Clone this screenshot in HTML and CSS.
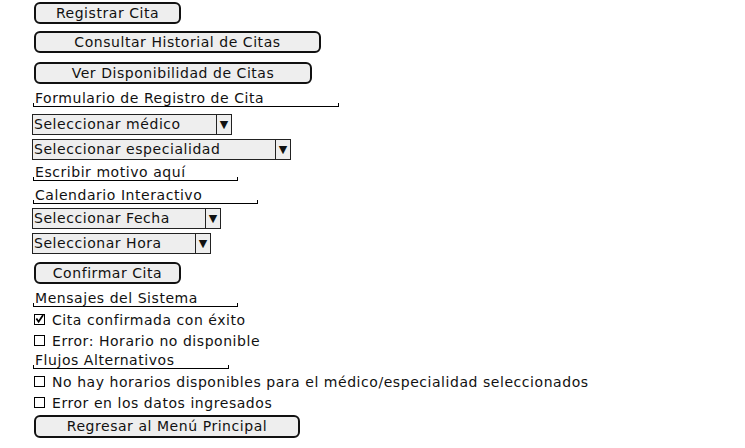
FILE: index.html
```html
<!DOCTYPE html>
<html lang="es">

<head>
    <meta charset="utf-8">
    <title>Registro de Cita</title>
    <link rel="stylesheet" href="styles.css">
</head>

<body>
    <main class="pantalla">
        <button class="boton boton-registrar">Registrar Cita</button>
        <button class="boton boton-historial">Consultar Historial de Citas</button>
        <button class="boton boton-disponibilidad">Ver Disponibilidad de Citas</button>

        <div class="campo campo-formulario">Formulario de Registro de Cita</div>
        <div class="lista lista-medico"><span class="valor">Seleccionar médico</span><span class="flecha">▼</span></div>
        <div class="lista lista-especialidad"><span class="valor">Seleccionar especialidad</span><span class="flecha">▼</span></div>
        <div class="campo campo-motivo">Escribir motivo aquí</div>

        <div class="campo campo-calendario">Calendario Interactivo</div>
        <div class="lista lista-fecha"><span class="valor">Seleccionar Fecha</span><span class="flecha">▼</span></div>
        <div class="lista lista-hora"><span class="valor">Seleccionar Hora</span><span class="flecha">▼</span></div>
        <button class="boton boton-confirmar">Confirmar Cita</button>

        <div class="campo campo-mensajes">Mensajes del Sistema</div>
        <label class="opcion"><span class="casilla marcada"><svg viewBox="0 0 10 10" width="10" height="10"><path d="M1.5 4.5 L4 8 L9 0.5" fill="none" stroke="#000" stroke-width="2"/></svg></span>Cita confirmada con éxito</label>
        <label class="opcion"><span class="casilla"></span>Error: Horario no disponible</label>

        <div class="campo campo-flujos">Flujos Alternativos</div>
        <label class="opcion"><span class="casilla"></span>No hay horarios disponibles para el médico/especialidad seleccionados</label>
        <label class="opcion"><span class="casilla"></span>Error en los datos ingresados</label>
        <button class="boton boton-regresar">Regresar al Menú Principal</button>
    </main>
</body></html>
```

FILE: styles.css
```css
* {
    margin: 0;
    box-sizing: border-box;
}

body {
    background-color: #fff;
    font-family: "DejaVu Sans", sans-serif;
    font-size: 14px;
    letter-spacing: 0.55px;
    color: #111;
}

.pantalla {
    display: flex;
    flex-direction: column;
    align-items: flex-start;
    padding: 2px 0 0 32px;
}

/* botones */
.boton {
    height: 22px;
    margin-left: 2px;
    padding: 0;
    border: 2px solid #111;
    border-radius: 6px;
    background-color: #eee;
    font-family: "DejaVu Sans", sans-serif;
    font-size: 14px;
    letter-spacing: 0.55px;
    line-height: 17px;
    color: #111;
}

.boton-registrar { width: 147px; }
.boton-historial { width: 287px; margin-top: 7px; }
.boton-disponibilidad { width: 278px; margin-top: 9px; }
.boton-confirmar { width: 147px; margin-top: 8px; }
.boton-regresar { width: 266px; margin-top: 2px; height: 23px; }

/* campos de texto */
.campo {
    position: relative;
    height: 17px;
    margin-left: 1px;
    padding-left: 2px;
    border-bottom: 1px solid #000;
    line-height: 16px;
}

.campo::before,
.campo::after {
    content: "";
    position: absolute;
    bottom: 0;
    width: 1px;
    height: 3px;
    background-color: #000;
}

.campo::before { left: 0; }
.campo::after { right: 0; }

.campo-formulario { width: 306px; margin-top: 6px; }
.campo-motivo { width: 205px; margin-top: 4px; }
.campo-calendario { width: 225px; margin-top: 6px; }
.campo-mensajes { width: 205px; margin-top: 6px; }
.campo-flujos { width: 196px; margin-top: 1px; }

/* listas desplegables */
.lista {
    display: flex;
    height: 21px;
    border: 1px solid #222;
    background-color: #eee;
    line-height: 19px;
}

.lista .valor {
    flex: 1;
    padding-left: 1px;
}

.lista .flecha {
    width: 15px;
    border-left: 1px solid #222;
    font-size: 11px;
    letter-spacing: 0;
    text-align: center;
}

.lista-medico { width: 200px; margin-top: 7px; }
.lista-especialidad { width: 259px; margin-top: 4px; }
.lista-fecha { width: 189px; margin-top: 4px; }
.lista-hora { width: 179px; margin-top: 4px; }

/* casillas */
.opcion {
    display: flex;
    align-items: center;
    gap: 7px;
    height: 21px;
    margin-left: 2px;
}

.campo + .opcion {
    margin-top: 2px;
}

.casilla {
    display: flex;
    width: 11px;
    height: 11px;
    border: 1px solid #000;
}

.casilla svg {
    margin: -1px 0 0 0;
}
```
